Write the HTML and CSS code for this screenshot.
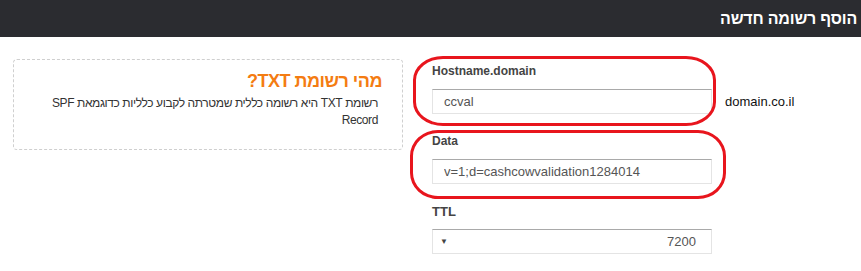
FILE: index.html
```html
<!DOCTYPE html>
<html lang="he">
  <head>
    <meta charset="UTF-8" />
    <meta name="viewport" content="width=device-width, initial-scale=1.0" />
    <title>הוסף רשומה חדשה</title>
    <link rel="stylesheet" href="styles.css">
  </head>
  <body>
    <div class="topbar">
      <h1>הוסף רשומה חדשה</h1>
    </div>

    <div class="page">
      <div class="info-box" dir="rtl">
        <h2>מהי רשומת TXT?</h2>
        <p>רשומת TXT היא רשומה כללית שמטרתה לקבוע כלליות כדוגמאת SPF Record</p>
      </div>

      <div class="record-form">
        <div class="field">
          <label for="hostname">Hostname.domain</label>
          <div class="field-row">
            <input type="text" id="hostname" value="ccval" />
            <span class="suffix">domain.co.il</span>
          </div>
        </div>

        <div class="field">
          <label for="data">Data</label>
          <input type="text" id="data" value="v=1;d=cashcowvalidation1284014" />
        </div>

        <div class="field">
          <label class="label-ttl">TTL</label>
          <div class="fake-select">
            <span class="arrow">&#9660;</span>
            <span>7200</span>
          </div>
        </div>

        <!-- סימוני עיגול אדומים -->
        <div class="mark mark-host"></div>
        <div class="mark mark-data"></div>
      </div>
    </div>
  </body>
</html>
```

FILE: styles.css
```css
body {
  font-family: "Liberation Sans", Arial, sans-serif;
  background: #fff;
  margin: 0;
  color: #333;
}
.topbar {
  background: #2b2c30;
  height: 37px;
  display: flex;
  align-items: center;
  justify-content: flex-end;
  padding-right: 4px;
}
.topbar h1 {
  margin: 0;
  color: #fff;
  font-size: 16px;
  font-weight: bold;
  letter-spacing: -0.2px;
  direction: rtl;
}
.page {
  display: flex;
  align-items: flex-start;
  padding: 22px 0 0 13px;
}
.info-box {
  width: 390px;
  height: 91px;
  border: 1px dashed #cfcfcf;
  border-radius: 4px;
  padding: 11px 20px 0 0;
  box-sizing: border-box;
  text-align: right;
}
.info-box h2 {
  margin: 0 0 3px;
  color: #f47c12;
  font-size: 18px;
  font-weight: bold;
  letter-spacing: -0.5px;
}
.info-box p {
  margin: 0;
  padding: 0 4px 0 22px;
  font-size: 12px;
  line-height: 17px;
  letter-spacing: -0.4px;
  color: #333;
}
.record-form {
  position: relative;
  margin-left: 29px;
  padding-top: 5px;
}
.field {
  margin-bottom: 20px;
}
.field label {
  display: block;
  font-size: 12px;
  font-weight: bold;
  line-height: 15px;
  color: #444;
  margin-bottom: 10px;
}
.field .label-ttl {
  font-size: 13px;
}
.field-row {
  display: flex;
  align-items: center;
}
input[type='text'] {
  width: 280px;
  height: 25px;
  box-sizing: border-box;
  padding: 0 11px;
  font-family: inherit;
  font-size: 13px;
  color: #555;
  border: 1px solid #e4e4e4;
  border-top-color: #a9a9a9;
  border-radius: 0;
  outline: none;
}
.suffix {
  margin-left: 13px;
  font-size: 13px;
  color: #111;
}
.fake-select {
  width: 280px;
  height: 25px;
  box-sizing: border-box;
  border: 1px solid #e4e4e4;
  border-top-color: #a9a9a9;
  display: flex;
  align-items: center;
  justify-content: space-between;
  padding: 0 15px 0 7px;
  font-size: 13px;
  color: #555;
}
.fake-select .arrow {
  font-size: 8px;
  color: #444;
}
.mark {
  position: absolute;
  border: 3px solid #e8151d;
  pointer-events: none;
}
.mark-host {
  left: -19px;
  top: -3px;
  width: 297px;
  height: 64px;
  border-radius: 30px / 24px;
}
.mark-data {
  left: -22px;
  top: 71px;
  width: 310px;
  height: 63px;
  border-radius: 28px / 26px;
}
```
